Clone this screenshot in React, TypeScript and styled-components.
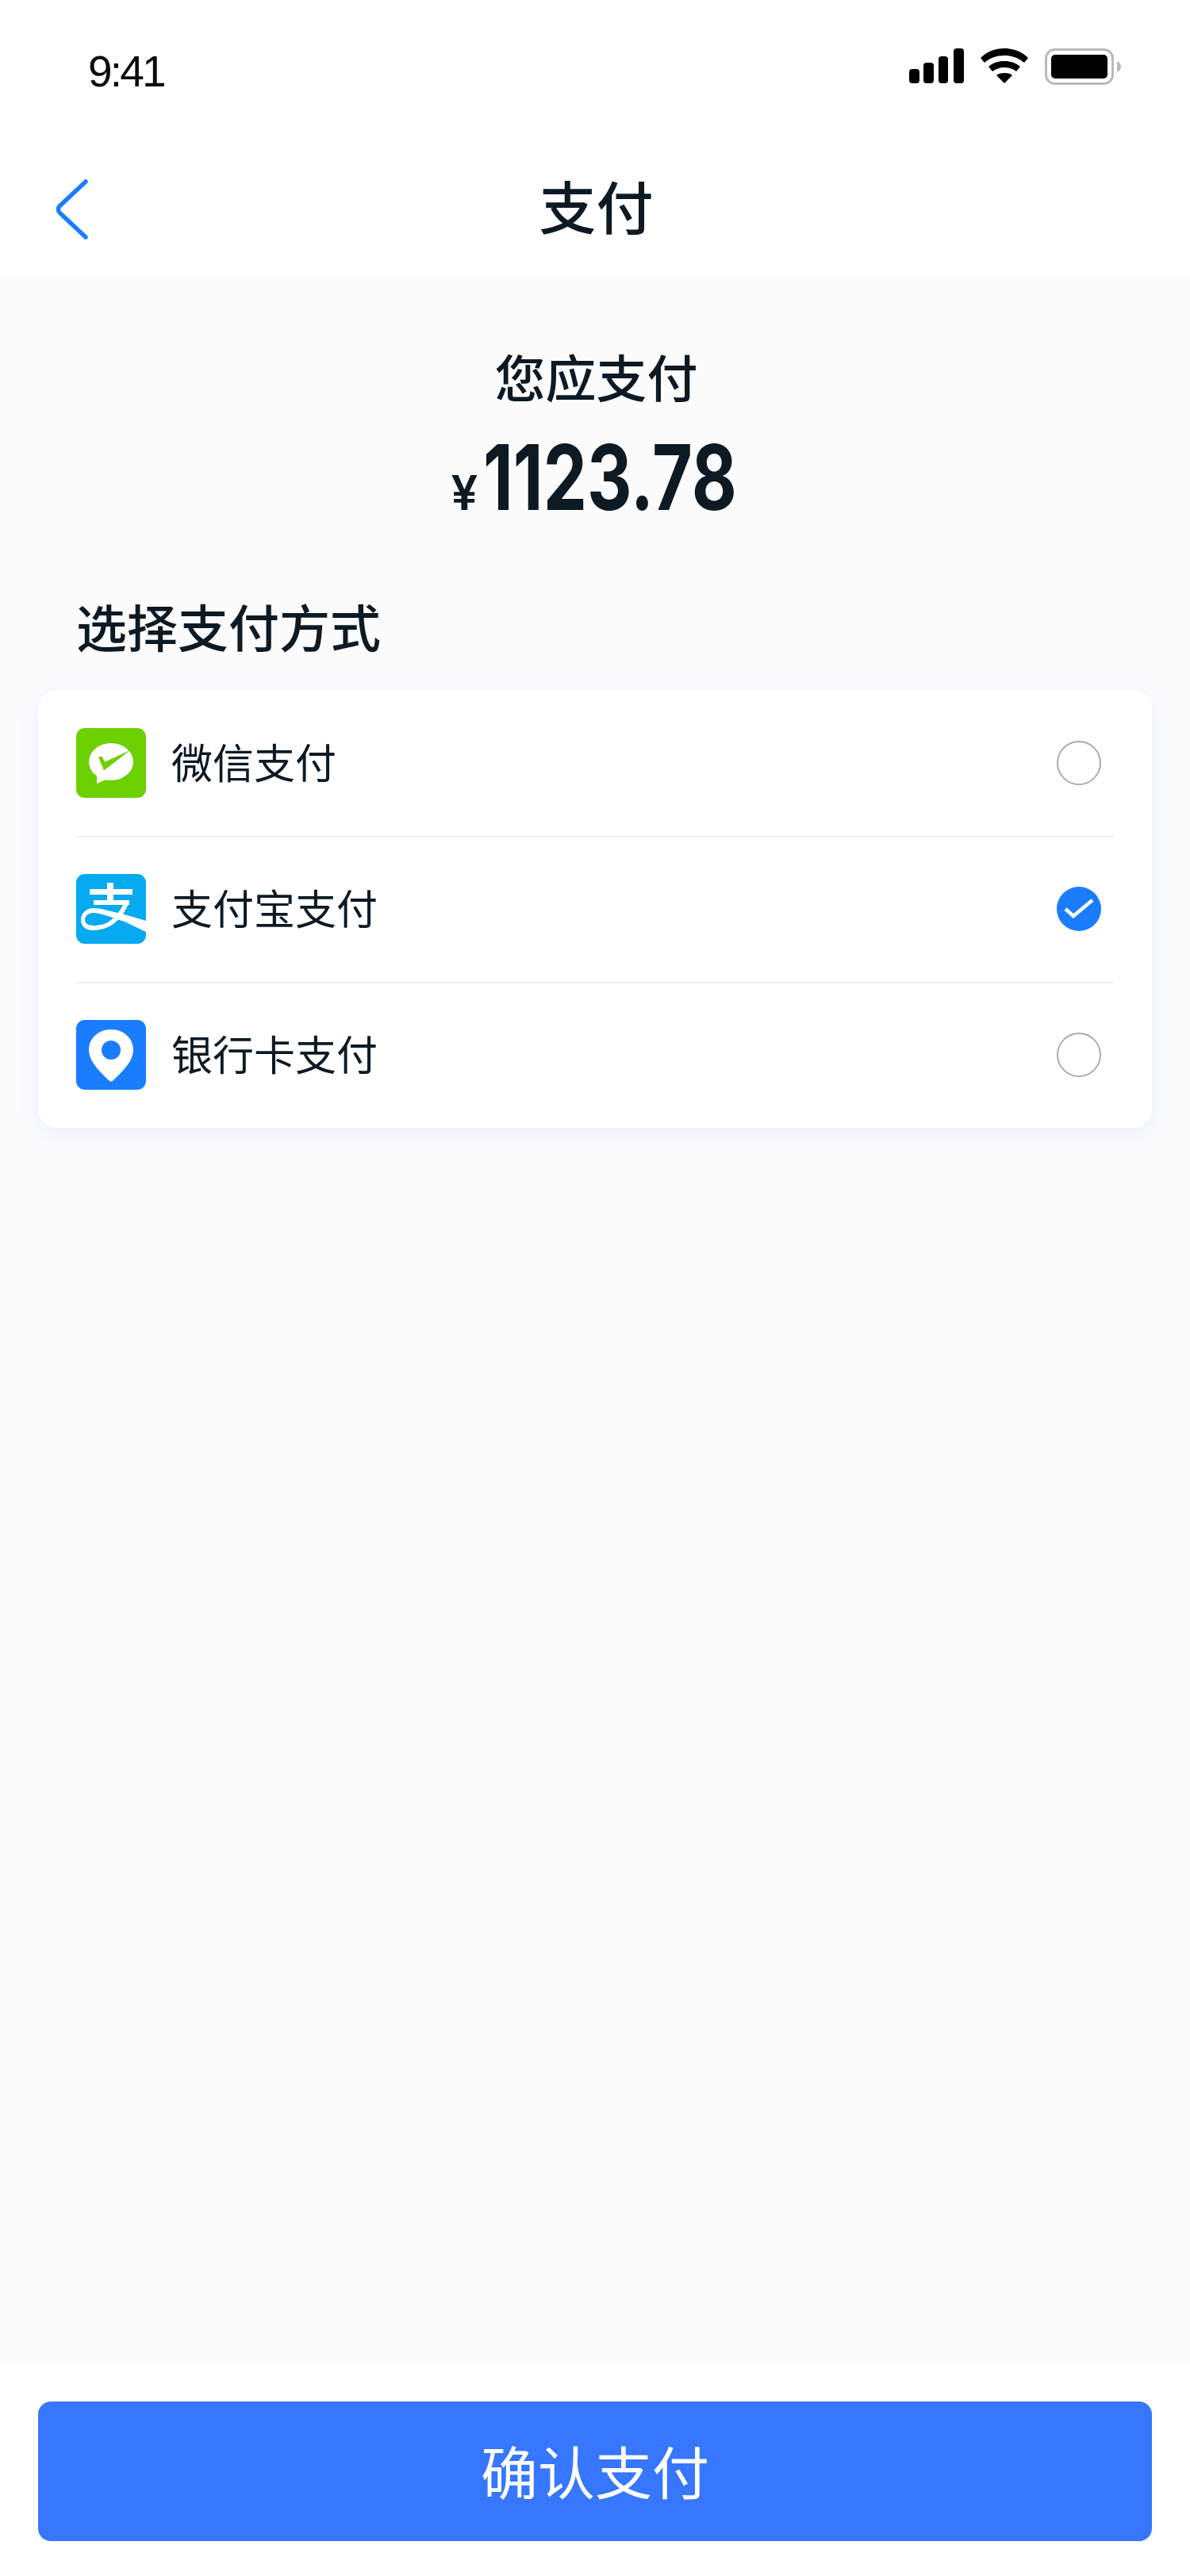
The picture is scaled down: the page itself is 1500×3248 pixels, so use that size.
import styled, { createGlobalStyle } from "styled-components";

const GlobalStyle = createGlobalStyle`
  html, body {
    margin: 0;
    padding: 0;
    background: #ffffff;
  }
  * {
    box-sizing: border-box;
  }
`;

const CJK = `"Noto Sans CJK SC", "Liberation Sans", sans-serif`;

const Screen = styled.div`
  width: 1500px;
  height: 3248px;
  display: flex;
  flex-direction: column;
  background: #fbfbfc;
  font-family: ${CJK};
  color: #0d1a24;
`;

const TopArea = styled.header`
  height: 352px;
  flex: none;
  display: flex;
  flex-direction: column;
  background: #ffffff;
`;

const StatusBar = styled.div`
  height: 176px;
  flex: none;
  display: flex;
  align-items: flex-start;
  justify-content: space-between;
  padding: 58px 87px 0 111px;
`;

const Clock = styled.span`
  font-family: "Liberation Sans", Arial, sans-serif;
  font-size: 55px;
  line-height: 64px;
  letter-spacing: -2.8px;
  color: #0a0a0a;
`;

const StatusIcons = styled.div`
  display: flex;
  align-items: flex-start;
  gap: 20px;
  padding-top: 3px;
`;

const NavBar = styled.nav`
  flex: 1;
  display: flex;
  align-items: flex-start;
  position: relative;
  justify-content: center;
`;

const BackButton = styled.button`
  position: absolute;
  left: 68px;
  top: 49px;
  width: 48px;
  height: 78px;
  padding: 0;
  border: 0;
  background: none;
  display: flex;
`;

const NavTitle = styled.h1`
  margin: 30px 0 0 3px;
  font-size: 72px;
  line-height: 104px;
  font-weight: 500;
`;

const Summary = styled.section`
  display: flex;
  flex-direction: column;
  align-items: center;
  padding-top: 75px;
`;

const DueLabel = styled.div`
  margin-left: 3px;
  font-size: 64px;
  line-height: 92px;
  font-weight: 500;
`;

const Amount = styled.div`
  display: flex;
  align-items: baseline;
  margin: 21px 8px 0 0;
  height: 124px;
  font-family: Inter, "Liberation Sans", sans-serif;
`;

const Currency = styled.span`
  font-size: 60px;
  line-height: 124px;
  font-weight: 600;
  margin-right: 7px;
`;

// Inter has a narrow proportional 1; squeezed to get the condensed numerals
const AmountValue = styled.span`
  display: inline-block;
  width: 314px;
  white-space: nowrap;
  font-size: 114px;
  line-height: 124px;
  font-weight: 700;
  transform: scaleX(0.77);
  transform-origin: left center;
`;

const SectionTitle = styled.h2`
  margin: 78px 0 0;
  padding-left: 96px;
  font-size: 64px;
  line-height: 92px;
  font-weight: 500;
`;

const MethodCard = styled.div`
  margin: 36px 48px 0;
  border-radius: 24px;
  background: #ffffff;
  box-shadow: 0 8px 32px rgba(24, 100, 220, 0.08);
`;

const MethodRow = styled.div`
  height: 184px;
  margin: 0 48px;
  display: flex;
  align-items: center;
  & + & {
    box-shadow: inset 0 2px 0 #eef0f2;
  }
`;

const MethodIcon = styled.svg`
  width: 88px;
  height: 88px;
  flex: none;
  display: block;
`;

const MethodName = styled.span`
  margin-left: 32px;
  padding-bottom: 4px;
  flex: 1;
  font-size: 52px;
  line-height: 76px;
`;

const Radio = styled.span<{ $checked?: boolean }>`
  width: 56px;
  height: 56px;
  margin-right: 16px;
  flex: none;
  border-radius: 50%;
  display: flex;
  align-items: center;
  justify-content: center;
  border: ${(p) => (p.$checked ? "none" : "2px solid #a8adb5")};
  background: ${(p) => (p.$checked ? "#1a7dff" : "#ffffff")};
`;

const Spacer = styled.div`
  flex: 1;
`;

const Footer = styled.footer`
  height: 268px;
  flex: none;
  padding: 48px 48px 0;
  background: #ffffff;
`;

const ConfirmButton = styled.button`
  width: 100%;
  height: 176px;
  padding: 0 0 6px;
  border: 0;
  border-radius: 16px;
  background: #3776ff;
  color: #ffffff;
  font-family: ${CJK};
  font-size: 72px;
  font-weight: 400;
`;

const WechatIcon = () => (
  <MethodIcon viewBox="0 0 88 88">
    <rect width="88" height="88" rx="11" fill="#6dd000" />
    <ellipse cx="44" cy="42.5" rx="28" ry="23.5" fill="#ffffff" />
    <path d="M26 58l0 12 14-6z" fill="#ffffff" />
    <path d="M28 36.5l4-1 4.5 7L68 28 35 53.5z" fill="#6dd000" />
  </MethodIcon>
);

const AlipayIcon = () => (
  <MethodIcon viewBox="0 0 88 88">
    <rect width="88" height="88" rx="11" fill="#06aaf0" />
    <g fill="#ffffff">
      <rect x="17" y="19" width="54" height="7" />
      <rect x="39" y="11" width="8" height="23" />
      <rect x="22" y="33" width="45" height="6" />
      {/* ribbon: sweeps in from the right edge, loops left and climbs back to the bar */}
      <path d="M22 43C32 43 47 48 61 51L88 59V73L61 60C47 56 32 49 22 49 15 49 11 53 11 58 11 62 15 65 22 65 30 65 38 63 44 58 51 52 57 44 60 37H66C63 46 56 56 47 63 40 68 30 71 21 71 11 71 6 65 6 58 6 50 12 43 22 43Z" />
    </g>
  </MethodIcon>
);

const BankIcon = () => (
  <MethodIcon viewBox="0 0 88 88">
    <rect width="88" height="88" rx="11" fill="#1a7dff" />
    <path
      d="M44 12c-16 0-28 11-28 26 0 15 16 29 25 38 2 2 4 2 6 0 9-9 25-23 25-38 0-15-12-26-28-26z"
      fill="#ffffff"
    />
    <circle cx="44" cy="38" r="12" fill="#1a7dff" />
  </MethodIcon>
);

const methods = [
  { name: "微信支付", Icon: WechatIcon, checked: false },
  { name: "支付宝支付", Icon: AlipayIcon, checked: true },
  { name: "银行卡支付", Icon: BankIcon, checked: false },
];

const App = () => {
  return (
    <Screen>
      <GlobalStyle />
      <TopArea>
        <StatusBar>
          <Clock>9:41</Clock>
          <StatusIcons>
            <svg width="69" height="44" viewBox="0 0 69 44" fill="#000">
              <rect x="0" y="26" width="13" height="18" rx="4" />
              <rect x="18" y="18" width="13" height="26" rx="4" />
              <rect x="37" y="10" width="12" height="34" rx="4" />
              <rect x="56" y="0" width="13" height="44" rx="4" />
            </svg>
            <svg width="62" height="44" viewBox="0 0 62 44" fill="#000">
              <path d="M31 0C19 0 9 4 1 12l5 6c7-6 15-9 25-9s18 3 25 9l5-6C53 4 43 0 31 0z" />
              <path d="M31 16c-8 0-14 2-20 7l5 6c4-3 9-5 15-5s11 2 15 5l5-6c-6-5-12-7-20-7z" />
              <path d="M31 31c-4 0-8 1-10 3l10 10 10-10c-2-2-6-3-10-3z" />
            </svg>
            <svg width="96" height="46" viewBox="0 0 96 46">
              <rect x="1.5" y="1.5" width="84" height="43" rx="11" fill="none" stroke="#b9b9b9" strokeWidth="3" />
              <rect x="8" y="8" width="71" height="30" rx="5" fill="#000" />
              <path d="M91 16c3 1 5 4 5 7s-2 6-5 7z" fill="#b9b9b9" />
            </svg>
          </StatusIcons>
        </StatusBar>
        <NavBar>
          <BackButton>
            <svg width="48" height="78" viewBox="0 0 48 78" fill="none">
              <path
                d="M40 4L7 35c-2 2-2 6 0 8l33 31"
                stroke="#1a7dff"
                strokeWidth="5.5"
                strokeLinecap="round"
                strokeLinejoin="round"
              />
            </svg>
          </BackButton>
          <NavTitle>支付</NavTitle>
        </NavBar>
      </TopArea>

      <Summary>
        <DueLabel>您应支付</DueLabel>
        <Amount>
          <Currency>¥</Currency>
          <AmountValue>1123.78</AmountValue>
        </Amount>
      </Summary>

      <SectionTitle>选择支付方式</SectionTitle>
      <MethodCard>
        {methods.map(({ name, Icon, checked }) => (
          <MethodRow key={name}>
            <Icon />
            <MethodName>{name}</MethodName>
            <Radio $checked={checked}>
              {checked && (
                <svg width="40" height="30" viewBox="0 0 40 30" fill="none">
                  <path d="M3 15l10 9L37 4" stroke="#ffffff" strokeWidth="4.5" />
                </svg>
              )}
            </Radio>
          </MethodRow>
        ))}
      </MethodCard>

      <Spacer />
      <Footer>
        <ConfirmButton>确认支付</ConfirmButton>
      </Footer>
    </Screen>
  );
};

export default App;
